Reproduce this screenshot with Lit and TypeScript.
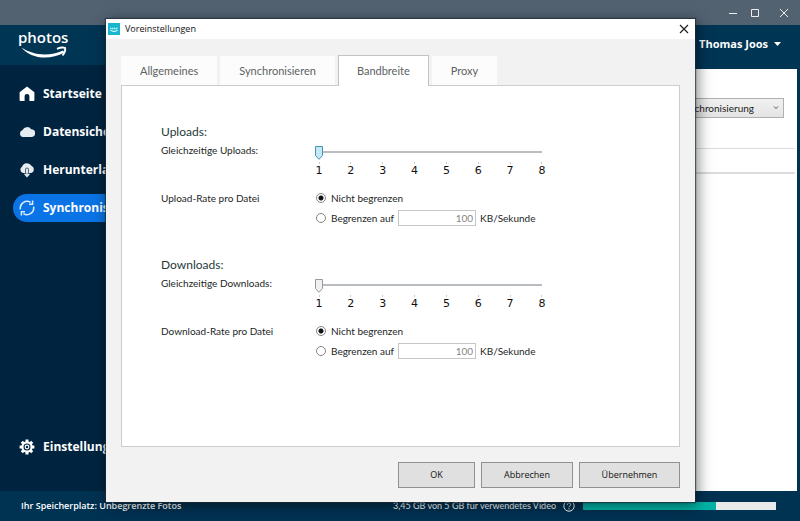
import { LitElement, html, css, svg } from "lit";
import { customElement, property, state } from "lit/decorators.js";
import { classMap } from "lit/directives/class-map.js";

const icons: Record<string, unknown> = {
  home: svg`<path fill="#fff" d="M8 0.4 0.6 6.2V14.2Q0.6 15 1.4 15H5.6V10Q5.6 8 8 8T10.4 10V15H14.6Q15.4 15 15.4 14.2V6.2Z"/>`,
  cloud: svg`<path fill="#e6ecf2" d="M4 13A3.6 3.6 0 0 1 3.6 6 4.8 4.4 0 0 1 12.2 5.2 3.9 3.9 0 0 1 12.2 13Z"/>`,
  download: svg`<path fill="#e6ecf2" d="M4 11A3.6 3.6 0 0 1 3.2 4.4 4.9 4.4 0 0 1 12.4 3.8 3.8 3.8 0 0 1 12.2 11Z"/><path d="M6.6 11V7.4Q6.6 6 8 6T9.4 7.4V11" fill="none" stroke="#5b6b7c" stroke-width="1.2"/><path d="M8 7V14.5M5.6 11.8 8 14.5 10.4 11.8" fill="none" stroke="#e6ecf2" stroke-width="1.4"/>`,
  sync: svg`<path d="M1.4 9.4A6.8 6.8 0 0 1 11.6 2.3M13.6 .6V4.2H10M14.6 6.6A6.8 6.8 0 0 1 4.4 13.7M2.4 15.4V11.8H6" fill="none" stroke="#d8ebff" stroke-width="1.5"/>`,
  gear: svg`<g fill="none" stroke="#fff"><path d="M8 .6V3M8 13V15.4M.6 8H3M13 8H15.4M2.8 2.8 4.5 4.5M11.5 11.5 13.2 13.2M2.8 13.2 4.5 11.5M11.5 4.5 13.2 2.8" stroke-width="3"/><circle cx="8" cy="8" r="4.6" stroke-width="2.2"/><circle cx="8" cy="8" r="1.8" stroke-width="1.2"/></g>`,
};

@customElement("rate-group")
class RateGroup extends LitElement {
  @property() heading = "";
  @property() countLabel = "";
  @property() rateLabel = "";
  @property({ type: Boolean }) hot = false;

  static styles = css`
    :host { display: block; }
    .heading { margin: 0 0 2px; font-size: 12px; font-weight: 400; line-height: 16px; color: #263a3a; }
    .grid { display: grid; grid-template-columns: 154px 1fr; }
    .label { line-height: 16px; }
    .slider { max-width: 231px; padding-top: 2px; margin-bottom: 12px; }
    .range { appearance: none; display: block; width: 100%; height: 18px; margin: 0; background: none; }
    .range::-webkit-slider-runnable-track {
      height: 14px;
      background: linear-gradient(#b9bcc0, #b9bcc0) 4px 5px / calc(100% - 8px) 2px no-repeat;
    }
    .range::-webkit-slider-thumb {
      appearance: none; width: 8px; height: 14px;
      background: url("data:image/svg+xml,%3Csvg xmlns='http://www.w3.org/2000/svg' width='8' height='14'%3E%3Cpath d='M.5.5h7v9L4 13.3.5 9.5z' fill='%23f0f0f0' stroke='%23999'/%3E%3C/svg%3E");
    }
    .range.hot::-webkit-slider-thumb {
      background: url("data:image/svg+xml,%3Csvg xmlns='http://www.w3.org/2000/svg' width='8' height='14'%3E%3Cpath d='M.5.5h7v9L4 13.3.5 9.5z' fill='%23c4e8f6' stroke='%234795b5'/%3E%3C/svg%3E");
    }
    .scale { display: flex; justify-content: space-between; font: 11px/14px "DejaVu Sans", sans-serif; color: #111; }
    .tick { display: flex; flex-direction: column; align-items: center; width: 8px; }
    .tick::before { content: ""; width: 1px; height: 2px; background: #c8c8c8; }
    .choices { display: grid; gap: 4px; }
    .choice { display: flex; align-items: center; height: 16px; }
    .radio {
      appearance: none; flex: none; width: 10px; height: 10px; margin: 0 5px 0 1px;
      border: 1px solid #858585; border-radius: 50%; background: #fff;
    }
    .radio:checked { background: radial-gradient(circle, #111 0 2px, #fff 3px); }
    .amount {
      box-sizing: border-box; width: 78px; height: 16px; margin: 0 4px; padding: 0 2px;
      border: 1px solid #c6c6c6; background: #fff; color: #858585; font: inherit; text-align: right;
    }
  `;

  render() {
    return html`
      <h2 class="heading">${this.heading}</h2>
      <div class="grid">
        <label class="label" for="count">${this.countLabel}</label>
        <div class="slider">
          <input id="count" class=${classMap({ range: true, hot: this.hot })} type="range" min="1" max="8" value="1" />
          <div class="scale">${[1, 2, 3, 4, 5, 6, 7, 8].map((n) => html`<span class="tick">${n}</span>`)}</div>
        </div>
        <span class="label" id="rate">${this.rateLabel}</span>
        <div class="choices" role="radiogroup" aria-labelledby="rate">
          <div class="choice"><input class="radio" type="radio" name="rate" id="free" checked /><label for="free">Nicht begrenzen</label></div>
          <div class="choice">
            <input class="radio" type="radio" name="rate" id="limit" /><label for="limit">Begrenzen auf</label>
            <input class="amount" type="text" value="100" id="amount" disabled /><label for="amount">KB/Sekunde</label>
          </div>
        </div>
      </div>
    `;
  }
}

@customElement("app-root")
class AppRoot extends LitElement {
  @state() tab = "Bandbreite";

  static styles = css`
    :host {
      display: flex; flex-direction: column; position: relative; min-height: 100vh; overflow: hidden;
      background: #003252; color: #fff; font: 10px/16px "Open Sans", sans-serif;
    }
    button { font: inherit; }
    .plain { display: flex; padding: 0; border: 0; background: none; }
    .titlebar {
      display: flex; justify-content: flex-end; align-items: center; gap: 12px;
      height: 25px; padding-right: 6px; background: #526271;
    }
    .window { display: grid; grid-template-columns: 170px 1fr; flex: 1; }
    .side { display: flex; flex-direction: column; background: #00243f; }
    .brand { height: 40px; background: #003554; }
    .logo { display: block; margin-left: 18px; }
    .nav { display: flex; flex-direction: column; flex: 1; gap: 10px; padding: 15px 0 30px 13px; }
    .item {
      display: flex; align-items: center; gap: 8px; height: 28px; padding-left: 6px;
      border-radius: 14px; color: #fff; font-size: 12px; font-weight: 700; text-decoration: none;
    }
    .item.active { background: #0a74e6; }
    .item.last { margin-top: auto; }
    .main { display: flex; flex-direction: column; }
    .account { display: flex; justify-content: flex-end; align-items: center; height: 38px; padding: 0 19px 6px; background: #003554; }
    .user { align-items: center; gap: 6px; color: #fff; font-size: 11px; font-weight: 700; }
    .content { flex: 1; margin-right: 3px; padding-top: 29px; background: #fff; }
    .filter { display: flex; justify-content: flex-end; align-items: center; padding-right: 13px; }
    .select {
      appearance: none; width: 150px; height: 20px; padding: 0 29px 0 0; border: 1px solid #b0b0b0; border-radius: 0;
      background: linear-gradient(#f1f1f1, #e4e4e4); color: #222; font: 10px/16px Lato, sans-serif; text-align-last: right;
    }
    .chevron { flex: none; width: 6px; margin: 0 5px 0 -11px; pointer-events: none; }
    .rowhead { height: 23px; margin: 30px 2px 0 0; border: solid #dcdcdc; border-width: 1px 0 2px; }
    .status { display: flex; align-items: center; height: 30px; padding: 0 24px 0 21px; font-size: 9px; }
    .strong { font-weight: 600; }
    .video { margin-left: auto; font-family: Lato, sans-serif; }
    .help { margin: 0 8px 0 7px; }
    .meter { width: 193px; height: 8px; background: #e8eaea; }
    .used { height: 100%; background: #00b3a6; }

    .dialog {
      position: absolute; inset: 19px 105px auto 106px; background: #f2f2f2; color: #1c2626;
      box-shadow: 0 0 1px 1px #1b2a35aa, 2px 3px 14px #0008;
    }
    .caption { display: flex; align-items: center; gap: 5px; height: 20px; padding: 0 6px 0 2px; background: #fff; font-size: 9px; color: #111; }
    .name { flex: 1; margin: 0; font-size: inherit; font-weight: 400; }
    .body { padding: 16px 15px 14px; }
    .tabs { display: flex; align-items: flex-end; gap: 3px; font: 11px/16px Lato, sans-serif; }
    .tab { height: 29px; padding: 0 19px; border: 0; background: #fcfcfc; color: #5c6262; }
    .tab.active { z-index: 1; height: 31px; margin-bottom: -1px; padding: 0 18px; border: 1px solid #c0c4c4; border-bottom: 0; background: #fff; }
    .panel {
      display: grid; gap: 31px; min-height: 284px; padding: 38px 39px; align-content: start;
      border: 1px solid #c9cdcd; background: #fff; font-family: Lato, sans-serif;
    }
    .actions { display: flex; justify-content: flex-end; gap: 6px; margin-top: 15px; }
    .push { height: 26px; padding: 0; border: 1px solid #919191; background: #e0e0e0; color: #111; font-size: 9px; }
    .small { width: 77px; }
    .medium { width: 92px; }
    .large { width: 101px; }
  `;

  item(icon: string, text: string, extra = {}) {
    return html`<a href="#" class=${classMap({ item: true, ...extra })}>
      <svg width="16" height="16" viewBox="0 0 16 16">${icons[icon]}</svg>${text}</a>`;
  }

  render() {
    return html`
      <header class="titlebar">
        <button class="plain" aria-label="Minimieren"><svg width="10" height="10"><path d="M1 5.5h8" stroke="#eee" /></svg></button>
        <button class="plain" aria-label="Maximieren"><svg width="10" height="10"><path d="M1.5 1.5h7v7h-7z" stroke="#eee" fill="none" /></svg></button>
        <button class="plain" aria-label="Beenden"><svg width="22" height="10"><path d="M8 1l8 8M16 1l-8 8" stroke="#eee" /></svg></button>
      </header>
      <div class="window">
        <aside class="side">
          <div class="brand">
            <svg class="logo" width="54" height="36" viewBox="0 0 54 36" role="img">
              <text x="0" y="18" font-family="Open Sans" font-size="15" font-weight="600" fill="#fff">photos</text>
              <path d="M3.5 22.5C14 30 31 32 45 25.5L46.500 27.5C31 36 12 33.5 3.5 22.5Z" fill="#fff" />
              <path d="M39 23.8C42 22.5 45 22.2 47 22.8C47.6 25 47 27.5 44.5 30.5" fill="none" stroke="#fff" stroke-width="1.9" />
            </svg>
          </div>
          <nav class="nav">
            ${this.item("home", "Startseite")} ${this.item("cloud", "Datensicherung")}
            ${this.item("download", "Herunterladen")} ${this.item("sync", "Synchronisieren", { active: true })}
            ${this.item("gear", "Einstellungen", { last: true })}
          </nav>
        </aside>
        <main class="main">
          <div class="account">
            <button class="plain user">Thomas Joos <svg width="7" height="4"><path d="M0 0h7L3.5 4z" fill="#fff" /></svg></button>
          </div>
          <div class="content">
            <div class="filter">
              <select class="select" aria-label="Ansicht"><option>Synchronisierung</option></select>
              <svg class="chevron" height="4" viewBox="0 0 6 4"><path d="M1 .5l2 2 2-2" fill="none" stroke="#555" /></svg>
            </div>
            <div class="rowhead"></div>
          </div>
        </main>
      </div>
      <footer class="status">
        <span class="strong">Ihr Speicherplatz: Unbegrenzte Fotos</span>
        <span class="video">3,45 GB von 5 GB für verwendetes Video</span>
        <svg class="help" width="12" height="12" viewBox="0 0 12 12"><circle cx="6" cy="6" r="5.2" fill="none" stroke="#fff" /><path d="M4.3 4.8C4.3 2.5 7.7 2.5 7.7 4.6 7.7 6 6 5.8 6 7.2M6 8.2V9.3" fill="none" stroke="#fff" /></svg>
        <div class="meter"><div class="used" style="width:69%"></div></div>
      </footer>

      <section class="dialog" role="dialog" aria-labelledby="title">
        <div class="caption">
          <svg width="12" height="12"><rect width="12" height="12" fill="#18b7cf" /><path d="M2 5.5h8" stroke="#bdf1f7" stroke-width="1.5" stroke-dasharray="1.5 .5" /><path d="M2.5 7.5Q6 9.5 9.5 7.5" stroke="#fff" fill="none" /></svg>
          <h1 class="name" id="title">Voreinstellungen</h1>
          <button class="plain" aria-label="Schließen"><svg width="10" height="10"><path d="M1 1l8 8M9 1l-8 8" stroke="#222" stroke-width="1.2" /></svg></button>
        </div>
        <div class="body">
          <div class="tabs" role="tablist">
            ${["Allgemeines", "Synchronisieren", "Bandbreite", "Proxy"].map(
              (t) => html`<button role="tab" class=${classMap({ tab: true, active: t === this.tab })} @click=${() => (this.tab = t)}>${t}</button>`
            )}
          </div>
          <div class="panel" role="tabpanel">
            <rate-group heading="Uploads:" countLabel="Gleichzeitige Uploads:" rateLabel="Upload-Rate pro Datei" hot></rate-group>
            <rate-group heading="Downloads:" countLabel="Gleichzeitige Downloads:" rateLabel="Download-Rate pro Datei"></rate-group>
          </div>
          <div class="actions">
            <button class="push small">OK</button>
            <button class="push medium">Abbrechen</button>
            <button class="push large">Übernehmen</button>
          </div>
        </div>
      </section>
    `;
  }
}
